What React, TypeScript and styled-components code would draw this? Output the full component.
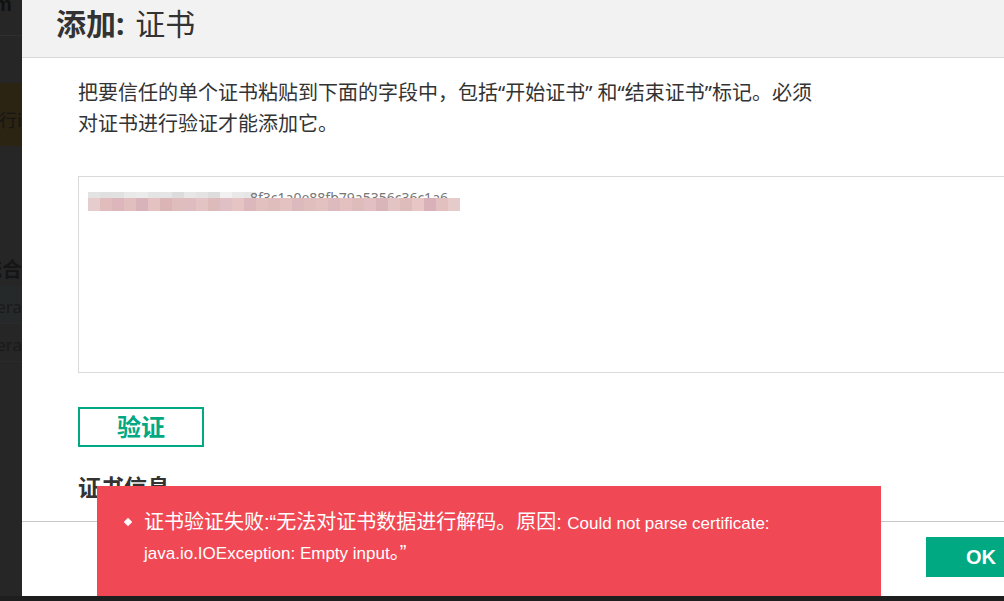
import React from 'react';
import styled, { createGlobalStyle } from 'styled-components';

const GlobalStyle = createGlobalStyle`
  html, body {
    margin: 0;
    padding: 0;
    width: 100%;
    height: 100%;
    overflow: hidden;
  }
  body {
    background: #262626;
    font-family: 'Noto Sans', 'Noto Sans CJK SC', sans-serif;
  }
`;

const CJK = `'Noto Sans', 'Noto Sans CJK SC', sans-serif`;
const GREEN = '#01a982';

// pixelated (blurred out) certificate text in the textarea
const PINK = [
  '#e6cccc', '#e0bcbc', '#dcb6bb', '#e2bfbf', '#d8b3b9', '#e4c2c2', '#dbb5b5', '#e0bdbd',
  '#dfbcbf', '#e3c3c3', '#debbbb', '#e0c0c4', '#e6c4c4', '#dcb8bd', '#e2c0c0', '#dfbdbd',
  '#e5c2c2', '#dbb9bd', '#e0bebe', '#e3c1c1', '#dcbabe', '#e4c0c0', '#dfbcbc', '#e1bfc2',
  '#d9b4b8', '#e3c3c3', '#debcbc', '#e8c6c6', '#d8b2b8', '#e2c0c0', '#e6cbcb',
];
const GRAY = [
  '#e3e3e3', '#e0e0e0', '#e1e1e1', '#e9e9e9', '#ebebeb', '#e4e4e4', '#e5e5e5', '#dcdcdc',
  '#e7e7e7', '#e3e3e3', '#dddddd', '#f1f1f1', '#e9e9e9', '#e6e6e6',
];

const App = () => {
  return (
    <>
      <GlobalStyle />
      <Page>
        <Backdrop>
          <BackTop>
            <BackGlyph>m</BackGlyph>
          </BackTop>
          <BackAlert>
            <BackLine>需要进行i</BackLine>
          </BackAlert>
          <BackHeading>
            <BackLine>系统名称统合</BackLine>
          </BackHeading>
          <BackRow $shaded>
            <BackLine>Genera</BackLine>
          </BackRow>
          <BackRow>
            <BackLine>Genera</BackLine>
          </BackRow>
          <BackFill />
        </Backdrop>
        <BottomBand />

        <Dialog>
          <DialogHeader>
            <Title>
              <strong>添加:</strong> 证书
            </Title>
          </DialogHeader>
          <DialogBody>
            <Description>
              把要信任的单个证书粘贴到下面的字段中，包括“开始证书” 和“结束证书”标记。必须
              <br />
              对证书进行验证才能添加它。
            </Description>
            <CertField>
              <Mosaic>
                <MosaicTop>
                  {GRAY.map((c, i) => (
                    <Cell key={i} style={{ background: c }} />
                  ))}
                  <HiddenText>8f3c1a0e88fb79a5356c36c1a6</HiddenText>
                </MosaicTop>
                <MosaicRow>
                  {PINK.map((c, i) => (
                    <Cell key={i} style={{ background: c }} />
                  ))}
                </MosaicRow>
              </Mosaic>
            </CertField>
            <VerifyButton>验证</VerifyButton>
            <SectionTitle>证书信息</SectionTitle>
          </DialogBody>
          <DialogFooter>
            <OkButton>OK</OkButton>
          </DialogFooter>
        </Dialog>

        <Toast>
          <Bullet />
          <ToastText>
            证书验证失败:“无法对证书数据进行解码。原因: <Latin>Could not parse certificate:</Latin>
            <br />
            <Latin>java.io.IOException: Empty input</Latin>。”
          </ToastText>
        </Toast>
      </Page>
    </>
  );
};

const Page = styled.div`
  position: relative;
  width: 1004px;
  height: 601px;
  overflow: hidden;
  background: #262626;
  display: flex;
  flex-direction: column;
`;

// the page behind the modal overlay, only its left edge shows
const Backdrop = styled.div`
  width: 22px;
  flex: 1;
  display: flex;
  flex-direction: column;
  overflow: hidden;
`;

const BackTop = styled.div`
  height: 35px;
  border-bottom: 1px solid #2f2f2f;
  display: flex;
  align-items: flex-start;
`;

const BackGlyph = styled.span`
  font: 700 20px/10px 'Liberation Sans', sans-serif;
  color: #111;
  margin: -1px 0 0 -6px;
`;

const BackLine = styled.span`
  white-space: nowrap;
  font-family: 'Noto Sans CJK SC', sans-serif;
  font-size: 18px;
  color: #151515;
`;

const BackAlert = styled.div`
  margin-top: 47px;
  height: 63px;
  background: #2b2413;
  display: flex;
  justify-content: flex-end;
  align-items: center;
  padding-top: 8px;
  box-sizing: border-box;
`;

const BackHeading = styled.div`
  margin-top: 104px;
  height: 36px;
  display: flex;
  justify-content: flex-end;
  align-items: center;

  ${BackLine} {
    font-weight: 700;
    font-size: 20px;
  }
`;

const BackRow = styled.div<{ $shaded?: boolean }>`
  height: 38px;
  display: flex;
  justify-content: flex-end;
  align-items: center;
  padding-top: 4px;
  box-sizing: border-box;
  background: ${(p) => (p.$shaded ? '#252929' : 'transparent')};
  border-bottom: 1px solid #2a2a2a;

  ${BackLine} {
    font-family: 'Noto Sans', sans-serif;
    font-size: 17px;
    color: #1a1a1a;
  }
`;

const BackFill = styled.div`
  flex: 1;
  background: #262626;
`;

const BottomBand = styled.div`
  height: 5px;
  background: #1e1e1e;
`;

const Dialog = styled.div`
  position: absolute;
  left: 22px;
  top: 0;
  width: 1010px;
  height: 596px;
  background: #fff;
  display: flex;
  flex-direction: column;
`;

const DialogHeader = styled.div`
  height: 57px;
  background: #f2f2f2;
  border-bottom: 1px solid #d9d9d9;
  display: flex;
  align-items: center;
  padding-left: 34px;
`;

const Title = styled.h1`
  margin: -14px 0 0;
  font-family: ${CJK};
  font-size: 30px;
  font-weight: 400;
  color: #333;

  strong {
    font-weight: 700;
    margin-right: 3px;
  }
`;

const DialogBody = styled.div`
  flex: 1;
  padding: 19px 0 0 56px;
  display: flex;
  flex-direction: column;
  align-items: flex-start;
  overflow: hidden;
`;

const Description = styled.p`
  margin: 0;
  font-family: ${CJK};
  font-size: 20px;
  line-height: 31px;
  color: #333;
  white-space: nowrap;
`;

const CertField = styled.div`
  margin-top: 37px;
  width: 960px;
  height: 180px;
  border: 1px solid #d9d9d9;
  padding-top: 15px;
`;

const Mosaic = styled.div`
  display: flex;
  flex-direction: column;
  padding-left: 9px;
`;

const MosaicTop = styled.div`
  display: flex;
  height: 6px;
  overflow: hidden;
  align-items: flex-start;
`;

const MosaicRow = styled.div`
  display: flex;
  height: 13px;
`;

const Cell = styled.span`
  width: 12px;
  height: 100%;
  flex: none;
`;

const HiddenText = styled.span`
  font-family: 'Noto Sans', sans-serif;
  font-size: 14px;
  line-height: 14px;
  color: #777;
  white-space: nowrap;
  margin: -1px 0 0 -6px;
`;

const VerifyButton = styled.button`
  margin-top: 34px;
  width: 126px;
  height: 40px;
  border: 2px solid ${GREEN};
  background: #fff;
  color: ${GREEN};
  font-family: 'Noto Sans CJK SC', sans-serif;
  font-size: 24px;
  font-weight: 700;
  line-height: 1;
  padding: 0 0 2px;
  cursor: pointer;
`;

const SectionTitle = styled.h2`
  margin: 22px 0 0;
  font-family: 'Noto Sans CJK SC', sans-serif;
  font-size: 23px;
  font-weight: 700;
  color: #333;
`;

const DialogFooter = styled.div`
  height: 75px;
  border-top: 1px solid #c8c8c8;
  display: flex;
  align-items: flex-start;
  padding: 15px 0 0 904px;
  box-sizing: border-box;
`;

const OkButton = styled.button`
  width: 100px;
  height: 40px;
  border: none;
  background: ${GREEN};
  color: #fff;
  font-family: 'Liberation Sans', sans-serif;
  font-size: 20px;
  font-weight: 700;
  text-align: left;
  padding: 0 0 0 40px;
`;

const Toast = styled.div`
  position: absolute;
  left: 97px;
  top: 486px;
  width: 784px;
  height: 110px;
  background: #f04955;
  display: flex;
  align-items: flex-start;
  padding: 22px 0 0 28px;
  box-sizing: border-box;
  gap: 13px;
`;

const Bullet = styled.span`
  width: 6px;
  height: 6px;
  margin-top: 11px;
  background: #fff;
  transform: rotate(45deg);
  flex: none;
`;

const ToastText = styled.div`
  font-family: 'Liberation Sans', 'Noto Sans CJK SC', sans-serif;
  font-size: 20px;
  line-height: 28px;
  color: #fff;
`;

const Latin = styled.span`
  font-size: 17px;
`;

export default App;
